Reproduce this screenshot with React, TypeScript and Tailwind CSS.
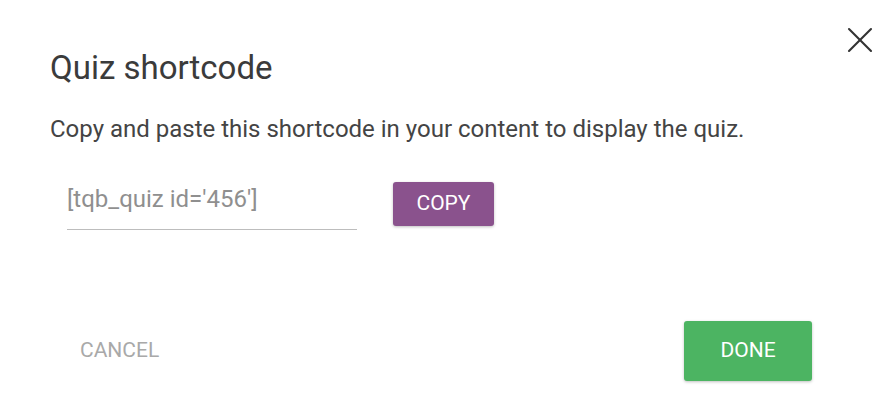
import { X } from 'lucide-react';

export default function App() {
  return (
    <div className="relative h-[411px] w-full overflow-hidden bg-white font-['Roboto',sans-serif]">
      {/* close */}
      <button className="absolute right-[1px] top-[18px] flex h-[44px] w-[44px] items-center justify-center text-[#333]">
        <X className="h-[44px] w-[44px]" strokeWidth={1.15} />
      </button>

      <div className="flex flex-col pl-[50px]">
        <h2 className="mt-[48px] text-[33px] leading-[40px] text-[#3b3b3b]">Quiz shortcode</h2>
        <p className="mt-[27px] text-[24px] leading-[28px] text-[#444]">
          Copy and paste this shortcode in your content to display the quiz.
        </p>

        <div className="mt-[39px] flex items-start">
          <div className="ml-[17px] h-[48px] w-[290px] border-b border-[#bdbdbd] pt-[3px]">
            <span className="block text-[24px] leading-[28px] text-[#8f8f8f]">[tqb_quiz id='456']</span>
          </div>
          <button className="ml-[36px] h-[44px] w-[101px] rounded-[3px] bg-[#8a528d] text-[21px] text-white shadow-[0_1px_3px_rgba(0,0,0,0.25)]">
            COPY
          </button>
        </div>

        <div className="mt-[91px] flex items-center justify-between pr-[71px]">
          <button className="ml-[30px] text-[21px] text-[#a9a9a9]">CANCEL</button>
          <button className="h-[60px] w-[128px] rounded-[3px] bg-[#4cb462] text-[21px] text-white shadow-[0_1px_3px_rgba(0,0,0,0.25)]">
            DONE
          </button>
        </div>
      </div>
    </div>
  );
}
